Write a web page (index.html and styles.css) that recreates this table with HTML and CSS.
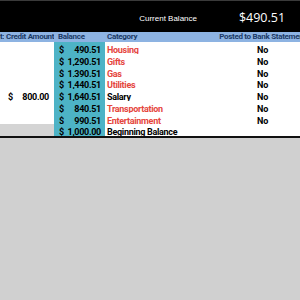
FILE: index.html
```html
<!DOCTYPE html>
<html>
<head>
<meta charset="utf-8">
<link rel="stylesheet" href="styles.css">
</head>
<body>
<div class="sheet">
  <div class="top">
    <div class="ticks"></div>
    <div class="toprow">
      <div class="cb-label">Current Balance</div>
      <div class="cb-value">$490.51</div>
    </div>
  </div>
  <div class="grid">
    <div class="hd c0">t:</div>
    <div class="hd c1">Credit Amount</div>
    <div class="hd c2">Balance</div>
    <div class="hd c3">Category</div>
    <div class="hd c4">Posted to Bank Statement</div>

    <div class="cell"></div><div class="cell"></div>
    <div class="cell bal"><span>$</span><span>490.51</span></div>
    <div class="cell cat red">Housing</div>
    <div class="cell no">No</div>

    <div class="cell"></div><div class="cell"></div>
    <div class="cell bal"><span>$</span><span>1,290.51</span></div>
    <div class="cell cat red">Gifts</div>
    <div class="cell no">No</div>

    <div class="cell"></div><div class="cell"></div>
    <div class="cell bal"><span>$</span><span>1,390.51</span></div>
    <div class="cell cat red">Gas</div>
    <div class="cell no">No</div>

    <div class="cell"></div><div class="cell"></div>
    <div class="cell bal"><span>$</span><span>1,440.51</span></div>
    <div class="cell cat red">Utilities</div>
    <div class="cell no">No</div>

    <div class="cell"></div>
    <div class="cell credit"><span>$</span><span>800.00</span></div>
    <div class="cell bal"><span>$</span><span>1,640.51</span></div>
    <div class="cell cat">Salary</div>
    <div class="cell no">No</div>

    <div class="cell"></div><div class="cell"></div>
    <div class="cell bal"><span>$</span><span>840.51</span></div>
    <div class="cell cat red">Transportation</div>
    <div class="cell no">No</div>

    <div class="cell"></div><div class="cell"></div>
    <div class="cell bal"><span>$</span><span>990.51</span></div>
    <div class="cell cat red">Entertainment</div>
    <div class="cell no">No</div>

    <div class="cell grey"></div><div class="cell grey"></div>
    <div class="cell bal"><span>$</span><span>1,000.00</span></div>
    <div class="cell cat">Beginning Balance</div>
    <div class="cell"></div>
  </div>
  <div class="rule"></div>
</div>
</body>
</html>
```
FILE: styles.css
```css
html, body {
  margin: 0;
  padding: 0;
  background: #d0d0d0;
}
body {
  width: 300px;
  height: 300px;
  overflow: hidden;
}
.sheet {
  width: 325px;
  font-family: Roboto, "Liberation Sans", Arial, sans-serif;
  font-weight: bold;
  font-size: 9px;
  letter-spacing: -0.3px;
}
.top {
  background: #000;
  height: 32px;
  display: flex;
  flex-direction: column;
}
.ticks {
  height: 1px;
  background: #3a3a3a;
}
.toprow {
  flex: 1;
  display: grid;
  grid-template-columns: 200px 125px;
  align-items: center;
  color: #fff;
}
.cb-label {
  font-family: "Liberation Sans", Arial, sans-serif;
  font-weight: normal;
  font-size: 8px;
  letter-spacing: 0;
  text-align: right;
  padding-right: 3px;
  padding-top: 3px;
}
.cb-value {
  font-family: "Open Sans", "Liberation Sans", sans-serif;
  font-weight: normal;
  font-size: 12.5px;
  letter-spacing: 0;
  text-align: center;
  padding-right: 1px;
  padding-top: 2px;
}
.grid {
  display: grid;
  grid-template-columns: 4px 50px 51px 95px 125px;
  grid-template-rows: 10px repeat(8, 11.75px);
  background: #fff;
}
.hd {
  background: #8db3e2;
  color: #1b3a66;
  font-size: 8px;
  letter-spacing: -0.3px;
  line-height: 10px;
  white-space: nowrap;
  overflow: hidden;
}
.hd.c0 { text-align: right; }
.hd.c1 { padding-left: 2px; }
.hd.c2 { padding-left: 4px; }
.hd.c3 { padding-left: 2px; }
.hd.c4 { text-align: center; }
.cell {
  line-height: 12px;
  padding-top: 2px;
  white-space: nowrap;
  overflow: hidden;
  color: #000;
  min-width: 0;
}
.bal {
  background: #4db3c6;
  display: flex;
  justify-content: space-between;
  padding: 2px 4px 0 5px;
}
.credit {
  display: flex;
  justify-content: space-between;
  padding: 2px 5px 0 4px;
}
.cat { padding-left: 2px; }
.red { color: #e5453d; }
.no { text-align: center; }
.grey { background: #d4d4d4; }
.rule {
  height: 2px;
  background: #111;
}
```
